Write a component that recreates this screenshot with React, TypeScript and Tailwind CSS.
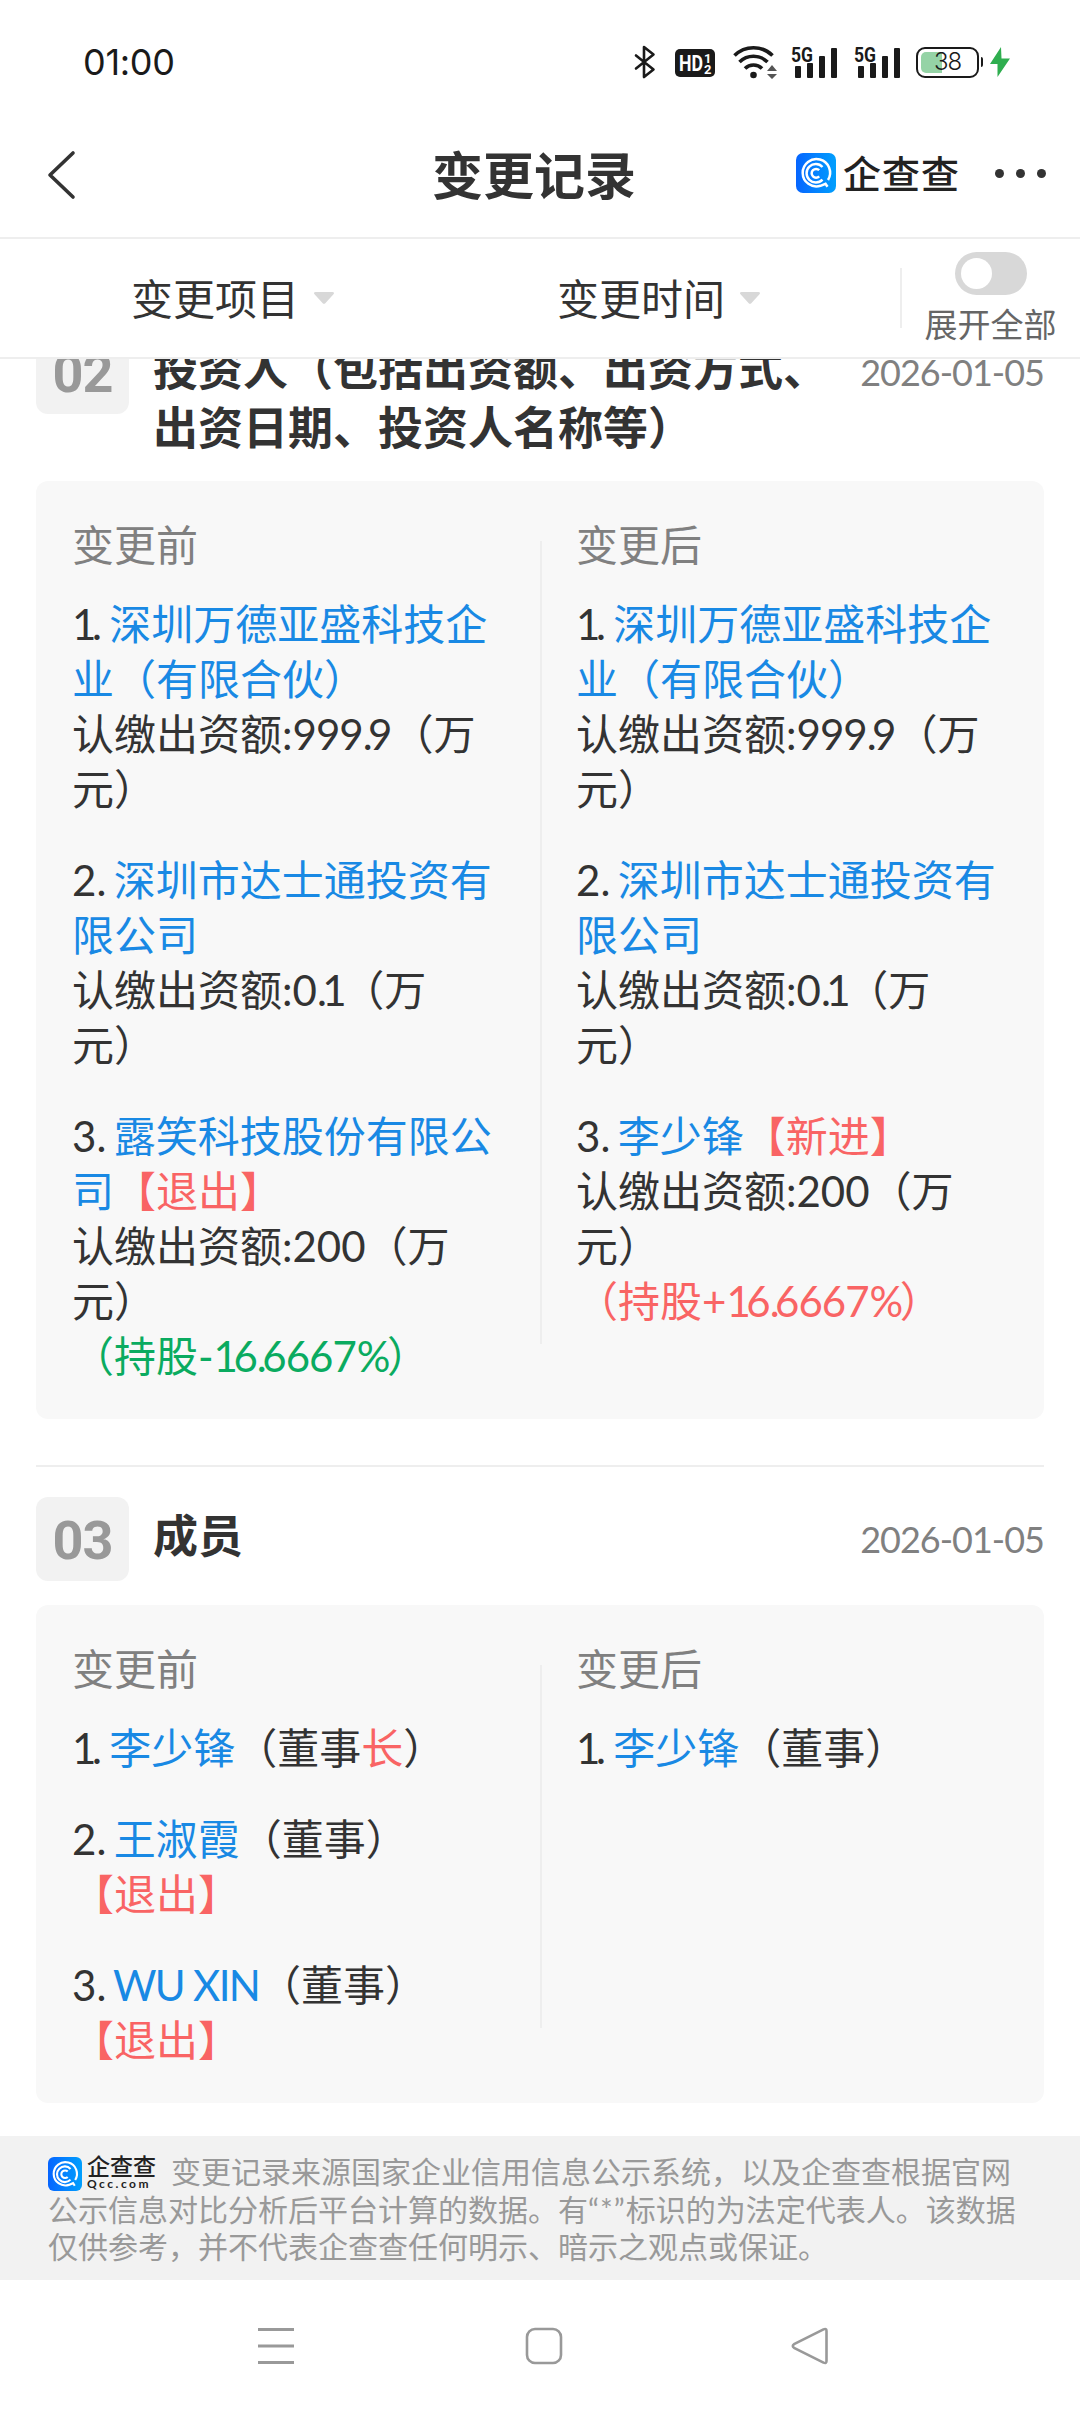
import { useState } from 'react';
import { clsx } from 'clsx';

type Tone = 'link' | 'up' | 'down';
type Segment = string | [string, Tone];
type Line = Segment[];

interface ChangeRecord {
  no: string;
  title: string[];
  date: string;
  before: Line[][];
  after: Line[][];
}

const toneClass: Record<Tone, string> = {
  link: 'text-[#1989e4]',
  up: 'text-[#f96464]',
  down: 'text-[#0aab60]',
};

const records: ChangeRecord[] = [
  {
    no: '02',
    title: ['投资人（包括出资额、出资方式、', '出资日期、投资人名称等）'],
    date: '2026-01-05',
    before: [
      [['1. ', ['深圳万德亚盛科技企', 'link']], [['业（有限合伙）', 'link']], ['认缴出资额:999.9（万'], ['元）']],
      [['2. ', ['深圳市达士通投资有', 'link']], [['限公司', 'link']], ['认缴出资额:0.1（万'], ['元）']],
      [
        ['3. ', ['露笑科技股份有限公', 'link']],
        [['司', 'link'], ['【退出】', 'up']],
        ['认缴出资额:200（万'],
        ['元）'],
        [['（持股-16.6667%）', 'down']],
      ],
    ],
    after: [
      [['1. ', ['深圳万德亚盛科技企', 'link']], [['业（有限合伙）', 'link']], ['认缴出资额:999.9（万'], ['元）']],
      [['2. ', ['深圳市达士通投资有', 'link']], [['限公司', 'link']], ['认缴出资额:0.1（万'], ['元）']],
      [
        ['3. ', ['李少锋', 'link'], ['【新进】', 'up']],
        ['认缴出资额:200（万'],
        ['元）'],
        [['（持股+16.6667%）', 'up']],
      ],
    ],
  },
  {
    no: '03',
    title: ['成员'],
    date: '2026-01-05',
    before: [
      [['1. ', ['李少锋', 'link'], '（董事', ['长', 'up'], '）']],
      [['2. ', ['王淑霞', 'link'], '（董事）'], [['【退出】', 'up']]],
      [['3. ', ['WU XIN', 'link'], '（董事）'], [['【退出】', 'up']]],
    ],
    after: [[['1. ', ['李少锋', 'link'], '（董事）']]],
  },
];

const glyphClass: Record<string, string> = {
  '1': 'tracking-[-4.5px]',
  '6': 'tracking-[-1px]',
  '9': 'tracking-[-1px]',
  '. ': 'tracking-[-1.7px]',
  '.': 'tracking-[-4.5px]',
  '%': 'tracking-[-3.5px]',
  'WU XIN': 'tracking-[-1.7px]',
};

function Glyphs({ text }: { text: string }) {
  return text
    .split(/(WU XIN|\. |[169.%])/)
    .filter(Boolean)
    .map((part, i) => (glyphClass[part] ? <span key={i} className={glyphClass[part]}>{part}</span> : part));
}

function SignalIcon() {
  return (
    <svg width="48" height="34" viewBox="0 0 48 34" className="overflow-visible" fill="#1a1a1a">
      <text x="0" y="16.5" fontFamily="Roboto" fontSize="20.5" fontWeight="700" textLength="22" lengthAdjust="spacingAndGlyphs">
        5G
      </text>
      <rect x="4" y="21" width="6" height="12" rx="1" />
      <rect x="16" y="18" width="6" height="15" rx="1" />
      <rect x="28" y="11" width="6" height="22" rx="1" />
      <rect x="40" y="3" width="6" height="30" rx="1" />
    </svg>
  );
}

function StatusBar() {
  return (
    <div className="flex h-[124px] shrink-0 items-center justify-between pl-[83px] pr-[70px] text-[#1a1a1a]">
      <span className="font-[Inter] text-[36px] tracking-[-0.3px]">01:00</span>
      <div className="flex items-center">
        <svg width="24" height="34" viewBox="0 0 24 34" fill="none" stroke="#1a1a1a" strokeWidth="2.6" strokeLinejoin="round" strokeLinecap="round">
          <path d="M3 10.500 20.500 24.500 11 32V2l9.500 7.500L3 23.500" />
        </svg>
        <svg width="40" height="28" viewBox="0 0 40 28" className="ml-[18px] mt-[2px]">
          <rect width="40" height="28" rx="5" fill="#1a1a1a" />
          <g fill="#fff" fontFamily="Roboto" fontWeight="700">
            <text x="4" y="22" fontSize="22" textLength="24" lengthAdjust="spacingAndGlyphs">HD</text>
            <text x="29" y="13.500" fontSize="13">1</text>
            <text x="29" y="25" fontSize="13">2</text>
          </g>
        </svg>
        <svg width="45" height="34" viewBox="0 0 45 34" className="ml-[18px]" fill="none" stroke="#1a1a1a" strokeWidth="3.600">
          <path d="M1.500 10.500a27 27 0 0 1 38 0" />
          <path d="M6.500 17a20 20 0 0 1 28 0" />
          <path d="M12 23.500a12 12 0 0 1 17 0" />
          <circle cx="20.500" cy="30" r="3.300" fill="#1a1a1a" stroke="none" />
          <path d="M39 20l5 6H34zM39 34l5-5H34z" fill="#555" stroke="none" />
        </svg>
        <div className="ml-[13px] flex gap-[15px]">
          <SignalIcon />
          <SignalIcon />
        </div>
        <div className="ml-[14px] flex items-center">
          <div className="relative flex h-[31px] w-[63px] items-center justify-center rounded-[9px] border-2 border-[#1a1a1a]">
            <div className="absolute left-[3px] top-[3px] h-[21px] w-[21px] rounded-l-[5px] bg-[#95d3a6]" />
            <span className="relative font-[Inter] text-[24px] font-light leading-none tracking-[-1px]">38</span>
          </div>
          <div className="ml-[2px] h-[10px] w-[2px] rounded-r bg-[#1a1a1a]" />
          <svg width="20" height="30" viewBox="0 0 20 30" className="ml-[7px]" fill="#2fae4f">
            <path d="M11 0 0 17h7.500v13L20 11.500h-8.500z" />
          </svg>
        </div>
      </div>
    </div>
  );
}

function BrandMark({ className }: { className?: string }) {
  return (
    <svg viewBox="0 0 40 40" className={className} fill="none" stroke="#fff" strokeWidth="2.500">
      <defs>
        <linearGradient id="brand" x1="0" y1="0" x2="1" y2="0">
          <stop offset="0" stopColor="#0665ff" />
          <stop offset="1" stopColor="#019ffd" />
        </linearGradient>
      </defs>
      <rect width="40" height="40" rx="7" fill="url(#brand)" stroke="none" />
      <path d="M32 27A13.700 13.700 0 1 0 24.500 32.800L29.500 30.800l2 3" />
      <path d="M26.500 14a9.200 9.200 0 1 0 0 12.600" />
      <path d="M23.200 17.200a4.400 4.400 0 1 0 0 6.200" />
    </svg>
  );
}

function Header() {
  return (
    <header className="flex h-[115px] shrink-0 items-center border-b-2 border-[#eee] pb-[11px]">
      <svg width="30" height="50" viewBox="0 0 30 50" className="ml-[47px]" fill="none" stroke="#333" strokeWidth="3.600" strokeLinecap="round" strokeLinejoin="round">
        <path d="M26 3 3 25l23 22" />
      </svg>
      <h1 className="ml-[355px] text-[51px] font-bold leading-none">变更记录</h1>
      <BrandMark className="ml-auto -mt-1 h-10 w-10" />
      <span className="ml-[7px] -mt-1 text-[38px] font-medium leading-none tracking-[1px] text-[#222]">企查查</span>
      <div className="-mt-1 ml-[35px] mr-[34px] flex gap-3">
        <i className="h-[9px] w-[9px] rounded-full bg-[#333]" />
        <i className="h-[9px] w-[9px] rounded-full bg-[#333]" />
        <i className="h-[9px] w-[9px] rounded-full bg-[#333]" />
      </div>
    </header>
  );
}

function Filter({ label, className }: { label: string; className?: string }) {
  return (
    <button className={clsx('flex items-center pt-[2px] text-[42px] leading-none', className)}>
      {label}
      <svg width="22" height="14" viewBox="0 0 22 14" className="-mt-[3px] ml-[14px]" fill="#d8d8d8">
        <path d="M2.500 1h17c1.500 0 2 1.300 1 2.300l-8 8.700a2 2 0 0 1-3 0l-8-8.700C.5 2.300 1 1 2.500 1z" />
      </svg>
    </button>
  );
}

function FilterBar() {
  const [expanded, setExpanded] = useState(false);

  return (
    <div className="flex h-[120px] shrink-0 items-center border-b-2 border-[#eee]">
      <Filter label="变更项目" className="ml-[131px]" />
      <Filter label="变更时间" className="ml-[222px]" />
      <div className="ml-auto flex items-center">
        <div className="h-[60px] w-[2px] bg-[#eee]" />
        <div className="-ml-[1px] flex w-[179px] flex-col items-center pb-[3px]">
          <button
            onClick={() => setExpanded(!expanded)}
            className={clsx('flex h-[43px] w-[72px] items-center rounded-full p-[6px]', expanded ? 'justify-end bg-[#128bed]' : 'bg-[#d8d8d8]')}
          >
            <i className="h-[31px] w-[31px] rounded-full bg-white" />
          </button>
          <span className="mt-[13px] text-[33px] leading-none text-[#666]">展开全部</span>
        </div>
      </div>
    </div>
  );
}

function ChangeColumn({ heading, items, className }: { heading: string; items: Line[][]; className?: string }) {
  return (
    <div className={clsx('whitespace-pre pb-[35px] pt-[37px] text-[42px] leading-[55px]', className)}>
      <div className="mb-6 text-[#808080]">{heading}</div>
      <div className="flex flex-col gap-9">
        {items.map((lines, i) => (
          <div key={i}>
            {lines.map((line, j) => (
              <div key={j} className="h-[55px]">
                {line.map((seg, k) => {
                  const [text, tone] = typeof seg === 'string' ? [seg, undefined] : seg;
                  return (
                    <span key={k} className={tone && toneClass[tone]}>
                      <Glyphs text={text} />
                    </span>
                  );
                })}
              </div>
            ))}
          </div>
        ))}
      </div>
    </div>
  );
}

function RecordSection({ record }: { record: ChangeRecord }) {
  return (
    <section>
      <div className="mb-6 flex items-start">
        <div className="flex h-[84px] w-[93px] items-center justify-center rounded-[12px] bg-[#f2f2f2] pt-[3px] font-[Roboto] text-[54px] font-bold leading-none tracking-[-1px] text-[#999]">
          {record.no}
        </div>
        <h2 className="ml-[24px] whitespace-pre pt-[10px] text-[45px] font-bold leading-[58.500px]">
          {record.title.map((t) => (
            <div key={t}>{t}</div>
          ))}
        </h2>
        <span className="ml-auto pt-[17px] text-[36px] leading-[50px] tracking-[-1px] text-[#808080]">{record.date}</span>
      </div>
      <div className="flex rounded-[12px] bg-[#f8f8f8]">
        <ChangeColumn heading="变更前" items={record.before} className="w-[504px] pl-9" />
        <div className="mb-[75px] mt-[60px] w-[2px] bg-[#eee]" />
        <ChangeColumn heading="变更后" items={record.after} className="flex-1 pl-[34px]" />
      </div>
    </section>
  );
}

function Disclaimer() {
  return (
    <footer className="h-[144px] shrink-0 bg-[#f2f2f2] px-12 pt-[17px] text-[30px] leading-[37px] text-[#999]">
      <div className="flex whitespace-nowrap">
        <BrandMark className="mt-[4px] h-[34px] w-[34px]" />
        <div className="ml-[5px] mr-[14px] mt-[2px] w-[70px] text-[#222]">
          <div className="text-[23px] font-medium leading-[23px]">企查查</div>
          <div className="text-[12px] font-bold leading-[11px] tracking-[2.500px]">Qcc.com</div>
        </div>
        <span>变更记录来源国家企业信用信息公示系统，以及企查查根据官网</span>
      </div>
      <div className="whitespace-nowrap">公示信息对比分析后平台计算的数据。有<span className="tracking-[1px]">“*”</span>标识的为法定代表人。该数据</div>
      <div className="whitespace-nowrap">仅供参考，并不代表企查查任何明示、暗示之观点或保证。</div>
    </footer>
  );
}

function SystemNav() {
  return (
    <nav className="flex h-[132px] shrink-0 items-center justify-between pl-[257px] pr-[251px]">
      <svg width="38" height="38" viewBox="0 0 38 38" stroke="#999" strokeWidth="2.800">
        <path d="M1 2.500h36M1 19h36M1 35.500h36" />
      </svg>
      <svg width="38" height="38" viewBox="0 0 38 38" className="ml-[2px]" fill="none" stroke="#999" strokeWidth="2.600">
        <rect x="2" y="2" width="34" height="34" rx="8" />
      </svg>
      <svg width="38" height="38" viewBox="0 0 38 38" fill="none" stroke="#999" strokeWidth="2.600" strokeLinejoin="round">
        <path d="M3 17.200 32.500 2.400q3-1.200 3 1.600v30q0 2.800-3 1.600L3 20.800q-2.400-1.800 0-3.600z" />
      </svg>
    </nav>
  );
}

export default function App() {
  return (
    <div className="flex h-[2412px] w-[1080px] flex-col overflow-hidden bg-white font-['Lato','Noto_Sans_CJK_SC',sans-serif] text-[#333]">
      <StatusBar />
      <Header />
      <FilterBar />
      <main className="flex-1 overflow-hidden px-9">
        <div className="-mt-[29px]">
          <RecordSection record={records[0]} />
          <div className="mb-[30px] mt-[46px] h-[2px] bg-[#eee]" />
          <RecordSection record={records[1]} />
        </div>
      </main>
      <Disclaimer />
      <SystemNav />
    </div>
  );
}
